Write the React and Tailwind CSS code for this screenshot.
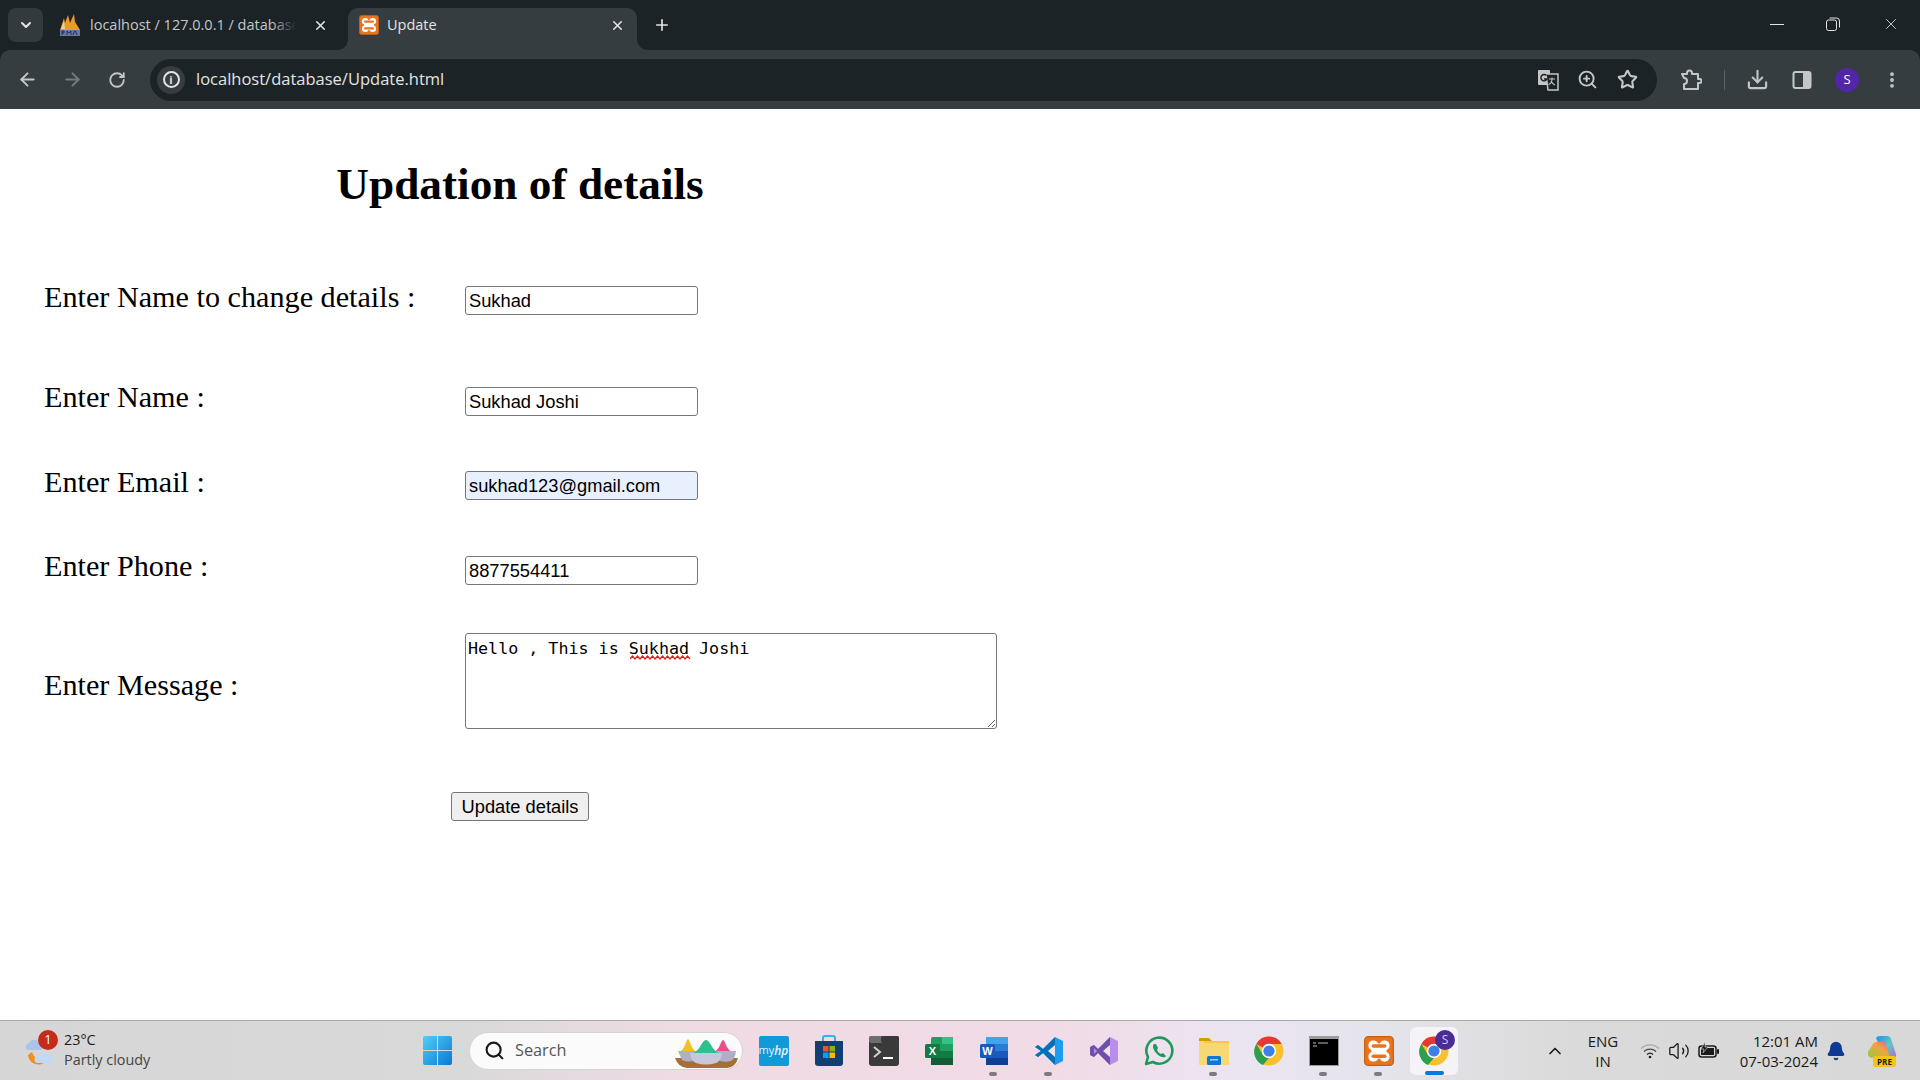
import React from 'react';
import {
  ArrowLeft, ArrowRight, RotateCw, X, Plus, ChevronDown, ChevronUp, Search, ZoomIn, Star,
  Download, EllipsisVertical, Bell, Volume2,
} from 'lucide-react';

const XamppIcon = ({ size = 20 }) => (
  <svg width={size} height={size} viewBox="0 0 24 24">
    <rect x="0.500" y="0.500" width="23" height="23" rx="3" fill="#e8741f" stroke="#c85f12" />
    <circle cx="7.500" cy="7.500" r="4" fill="#fff" />
    <circle cx="16.500" cy="7.500" r="4" fill="#fff" />
    <circle cx="7.500" cy="16.500" r="4" fill="#fff" />
    <circle cx="16.500" cy="16.500" r="4" fill="#fff" />
    <rect x="6" y="6" width="12" height="12" fill="#fff" />
    <rect x="6" y="6.500" width="12" height="2.800" rx="1.400" fill="#e8741f" />
    <rect x="6" y="14.700" width="12" height="2.800" rx="1.400" fill="#e8741f" />
  </svg>
);

const PmaIcon = () => (
  <svg width="22" height="24" viewBox="0 0 22 24">
    <path d="M1 17 5 5l1 5 3-8 2 8 4-9 1 8 5 8z" fill="#f09a26" />
    <path d="M2 16 5 8l1 8z" fill="#d9d4c8" />
    <rect x="1" y="17" width="20" height="6" fill="#6a78a8" />
    <path d="M3 22v-4h2v2H3m5 2v-4l2 2 2-2v4m2 0 1.500-4h1L18 22" fill="none" stroke="#20294d" strokeWidth="0.900" />
  </svg>
);

const TranslateIcon = () => (
  <svg width="22" height="22" viewBox="0 0 22 22">
    <rect x="1" y="1" width="12" height="15" rx="1" fill="#c4c7c5" />
    <path d="M9 5h12v16H11z" fill="#1b2327" stroke="#c4c7c5" strokeWidth="1.500" />
    <path d="M9.500 6.500a3.200 3.200 0 1 0 0.500 3.500H7" fill="none" stroke="#1b2327" strokeWidth="1.400" />
    <path d="M12 10h6M15 8.500V10c0 3-2 5-3.500 5.500M14 12c1 2 2.500 3.500 4 4" fill="none" stroke="#c4c7c5" strokeWidth="1.100" />
  </svg>
);

const PuzzleIcon = () => (
  <svg width="22" height="22" viewBox="0 0 22 22" fill="none" stroke="#c4c7c5" strokeWidth="2">
    <path d="M2 5h5V4a2.500 2.500 0 0 1 5 0v1h6v5h1.500a2 2 0 0 1 0 4H18v6H4v-5a3 3 0 0 0 0-6L2 5z" strokeLinejoin="round" />
  </svg>
);

const SidePanelIcon = () => (
  <svg width="20" height="20" viewBox="0 0 20 20">
    <rect x="1.500" y="2" width="17" height="16" rx="2" fill="none" stroke="#c4c7c5" strokeWidth="2" />
    <rect x="11" y="2" width="8" height="16" rx="1.500" fill="#c4c7c5" />
  </svg>
);

const RestoreIcon = () => (
  <svg width="14" height="14" viewBox="0 0 14 14" fill="none" stroke="#e3e3e3" strokeWidth="1">
    <rect x="0.500" y="3" width="10" height="10.500" rx="2" />
    <path d="M3.500 1h7a3 3 0 0 1 3 3v6.500" />
  </svg>
);

const WeatherIcon = () => (
  <svg width="32" height="36" viewBox="0 0 32 36">
    <path d="M3 22c1 7 7 11 14 9 2-1 4-2 5-4-6 1-13-1-15-8z" fill="#f28c1e" />
    <path d="M2 17a4 4 0 0 1 2-7 6 6 0 0 1 11 1 3 3 0 0 1 0 6z" fill="#a9c4e8" />
    <path d="M13 30a3.500 3.500 0 0 1 0-7 5 5 0 0 1 9-1 4 4 0 0 1 4 8z" fill="#c3d8f3" />
  </svg>
);

const WindowsLogo = () => (
  <svg width="29" height="29" viewBox="0 0 29 29">
    <defs>
      <linearGradient id="winA" x1="0" y1="0" x2="1" y2="1">
        <stop offset="0" stopColor="#4fd0f5" />
        <stop offset="1" stopColor="#0a78d4" />
      </linearGradient>
    </defs>
    <path d="M0 2a2 2 0 0 1 2-2h12v14H0zM15 0h12a2 2 0 0 1 2 2v12H15zM0 15h14v14H2a2 2 0 0 1-2-2zM15 15h14v12a2 2 0 0 1-2 2H15z" fill="url(#winA)" />
  </svg>
);

const HoliBowls = () => (
  <svg width="66" height="34" viewBox="0 0 66 34">
    <path d="M0 22h63q-2 9-11 10H12Q3 31 0 22z" fill="#a56f35" />
    <path d="M5 16q3-2 5-7 2-6 3-6t3 6q2 5 5 7z" fill="#eec32a" />
    <path d="M39 16q4-2 6-7 2-5 3-5t3 5q2 5 6 7z" fill="#e84f85" />
    <path d="M3 15h20l-2 9q-8 3-14 0z" fill="#b0afc8" />
    <path d="M39 15h22q-1 8-5 10-7 2-14-1z" fill="#b0afc8" />
    <path d="M17 18q6-3 9-9 3-5 5-5t5 5q3 6 9 9z" fill="#2dbf8e" />
    <path d="M15 17h32q-1 8-6 10-10 3-20 0-5-2-6-10z" fill="#c8c8dc" />
  </svg>
);

const MyHp = () => (
  <div className="w-[30px] h-[30px] bg-[#119ad8] rounded-[2px] flex items-center justify-center text-[11px] text-[#e6f5fc] font-['Open_Sans',sans-serif]">
    my<b className="italic text-[12px] font-semibold">hp</b>
  </div>
);

const StoreIcon = () => (
  <svg width="30" height="32" viewBox="0 0 30 32">
    <path d="M9 6V3a2 2 0 0 1 2-2h8a2 2 0 0 1 2 2v3" fill="none" stroke="#29b6e8" strokeWidth="2" />
    <path d="M1 6h28v22a3 3 0 0 1-3 3H4a3 3 0 0 1-3-3z" fill="#123f73" />
    <rect x="9" y="11" width="5.500" height="5.500" fill="#f25022" />
    <rect x="15.500" y="11" width="5.500" height="5.500" fill="#7fba00" />
    <rect x="9" y="17.500" width="5.500" height="5.500" fill="#00a4ef" />
    <rect x="15.500" y="17.500" width="5.500" height="5.500" fill="#ffb900" />
  </svg>
);

const TerminalIcon = () => (
  <svg width="30" height="30" viewBox="0 0 30 30">
    <rect width="30" height="30" rx="3" fill="#3a3a3a" />
    <rect x="0" width="30" height="7" rx="2" fill="#6d6d6d" />
    <rect x="12" width="18" height="7" rx="2" fill="#3a3a3a" />
    <path d="M5 11l6 5-6 5" fill="none" stroke="#d0d0d0" strokeWidth="2" />
    <path d="M14 22h10" stroke="#fff" strokeWidth="2" />
  </svg>
);

const ExcelIcon = () => (
  <svg width="30" height="30" viewBox="0 0 30 30">
    <rect x="7" y="1" width="22" height="28" rx="2" fill="#1f9d63" />
    <rect x="18" y="1" width="11" height="7" fill="#33c481" />
    <rect x="7" y="15" width="22" height="7" fill="#107c41" />
    <rect x="7" y="22" width="22" height="7" fill="#185c37" />
    <rect x="1" y="8" width="15" height="14" rx="1.500" fill="#107c41" />
    <text x="8.500" y="19" textAnchor="middle" fontSize="11" fontWeight="700" fill="#fff" fontFamily="Liberation Sans">X</text>
  </svg>
);

const WordIcon = () => (
  <svg width="30" height="30" viewBox="0 0 30 30">
    <rect x="7" y="1" width="22" height="28" rx="2" fill="#2b7cd3" />
    <rect x="7" y="1" width="22" height="7" fill="#41a5ee" />
    <rect x="7" y="15" width="22" height="7" fill="#185abd" />
    <rect x="7" y="22" width="22" height="7" fill="#103f91" />
    <rect x="1" y="8" width="15" height="14" rx="1.500" fill="#185abd" />
    <text x="8.500" y="19" textAnchor="middle" fontSize="11" fontWeight="700" fill="#fff" fontFamily="Liberation Sans">W</text>
  </svg>
);

const VsCodeIcon = () => (
  <svg width="30" height="30" viewBox="0 0 30 30">
    <path d="M21 1l8 4v20l-8 4L9 17l-5 4-3-2 6-4-6-4 3-2 5 4z" fill="#1f9cf0" />
    <path d="M21 1v28L9 17l-5 4-3-2 6-4-6-4 3-2 5 4z" fill="#0065a9" opacity="0.800" />
    <path d="M21 9l-7 6 7 6z" fill="#efe3ea" />
  </svg>
);

const VisualStudioIcon = () => (
  <svg width="30" height="30" viewBox="0 0 30 30">
    <path d="M21 1l8 4v20l-8 4L9 17l-4 4-4-2V11l4-2 4 4z" fill="#b78eea" />
    <path d="M21 1v28L9 17l-4 4-4-2V11l4-2 4 4z" fill="#6f4fa8" />
    <path d="M21 9l-7 6 7 6z" fill="#efe3ea" />
    <path d="M5 12v6l3-3z" fill="#b78eea" />
  </svg>
);

const WhatsAppIcon = () => (
  <svg width="32" height="32" viewBox="0 0 32 32">
    <path d="M3 29l2-7a13 13 0 1 1 5 5z" fill="none" stroke="#1d9a5a" strokeWidth="2.600" strokeLinejoin="round" />
    <path d="M11 9c-2 2-1 6 3 10s8 4 9 2l-3-3-2 1c-2-1-3-2-4-4l1-2-2-4z" fill="#1d9a5a" />
  </svg>
);

const FolderIcon = () => (
  <svg width="30" height="30" viewBox="0 0 30 30">
    <path d="M0 3a1 1 0 0 1 1-1h9l3 3h-13z" fill="#d79a10" />
    <rect y="5" width="30" height="24" rx="1" fill="#f8d775" />
    <rect x="5" y="5" width="25" height="2" fill="#f5c84c" />
    <rect x="8" y="20" width="14" height="9" rx="1.500" fill="#0a78d4" />
    <rect x="11" y="23" width="8" height="1.500" fill="#9ad0f5" />
  </svg>
);

const ChromeIcon = ({ size = 30 }) => (
  <svg width={size} height={size} viewBox="0 0 30 30">
    <circle cx="15" cy="15" r="14.500" fill="#fbc02d" />
    <path d="M15 .500A14.500 14.500 0 0 1 27.600 8H15a7 7 0 0 0-6.200 3.600L2.400 7.900A14.500 14.500 0 0 1 15 .500z" fill="#e53935" />
    <path d="M2.400 7.900l6.400 10.700a7 7 0 0 0 6.200 3.400l-6 7A14.500 14.500 0 0 1 2.400 7.900z" fill="#2e9e4f" />
    <circle cx="15" cy="15" r="7.200" fill="#fff" />
    <circle cx="15" cy="15" r="5.600" fill="#3f7fe8" />
  </svg>
);

const CmdIcon = () => (
  <svg width="30" height="30" viewBox="0 0 30 30">
    <rect width="30" height="30" fill="#9d9d9d" />
    <rect x="1" y="3" width="28" height="26" fill="#000" />
    <path d="M4 7h3M9 7h10M4 10h4" stroke="#bbb" strokeWidth="1" fill="none" />
  </svg>
);

const BatteryIcon = () => (
  <svg width="22" height="18" viewBox="0 0 22 18">
    <rect x="1" y="4" width="17" height="11" rx="2.500" fill="none" stroke="#1a1a1a" strokeWidth="1.500" />
    <rect x="3" y="6" width="13" height="7" fill="#1a1a1a" />
    <rect x="19" y="7" width="2" height="5" rx="1" fill="#1a1a1a" />
    <path d="M7 0 3 7h3l-1 4 5-6H7z" fill="#1a1a1a" stroke="#dcdcdc" strokeWidth="0.600" />
  </svg>
);

const WifiIcon = () => (
  <svg width="20" height="16" viewBox="0 0 20 16" fill="none">
    <path d="M1 5.500a13 13 0 0 1 18 0" stroke="#a8a8a8" strokeWidth="1.300" />
    <path d="M4 8.500a9 9 0 0 1 12 0" stroke="#4a4a4a" strokeWidth="1.300" />
    <path d="M7 11.500a4.500 4.500 0 0 1 6 0" stroke="#1a1a1a" strokeWidth="1.300" />
    <circle cx="10" cy="14" r="1.300" fill="#1a1a1a" />
  </svg>
);

const CopilotIcon = () => (
  <svg width="30" height="32" viewBox="0 0 30 32">
    <defs>
      <linearGradient id="copA" x1="0" y1="0" x2="1" y2="1">
        <stop offset="0" stopColor="#1d8fe8" />
        <stop offset="0.500" stopColor="#5fc8c0" />
        <stop offset="1" stopColor="#b56bd8" />
      </linearGradient>
      <linearGradient id="copB" x1="0" y1="1" x2="1" y2="0">
        <stop offset="0" stopColor="#8ccf3c" />
        <stop offset="0.600" stopColor="#f2a33c" />
        <stop offset="1" stopColor="#e85aa0" />
      </linearGradient>
    </defs>
    <path d="M9 3q1-2 4-2h7q3 0 4 3l5 15q1 4-3 4h-8z" fill="url(#copA)" />
    <path d="M1 17 6 9q1-2 4-2h8l5 16H6q-6 0-5-6z" fill="url(#copB)" />
  </svg>
);

const taskbarApps = [
  { key: 'myhp', icon: <MyHp /> },
  { key: 'store', icon: <StoreIcon /> },
  { key: 'terminal', icon: <TerminalIcon /> },
  { key: 'excel', icon: <ExcelIcon /> },
  { key: 'word', icon: <WordIcon />, open: true },
  { key: 'vscode', icon: <VsCodeIcon />, open: true },
  { key: 'vs', icon: <VisualStudioIcon /> },
  { key: 'whatsapp', icon: <WhatsAppIcon /> },
  { key: 'folder', icon: <FolderIcon />, open: true },
  { key: 'chrome', icon: <ChromeIcon /> },
  { key: 'cmd', icon: <CmdIcon />, open: true },
  { key: 'xampp', icon: <XamppIcon size={30} />, open: true },
];

function FormRow({ label, className = '', labelClass = '', children }) {
  return (
    <div className={`flex items-center ${className}`}>
      <label className={`w-[421px] text-[30.200px] leading-[34px] text-black ${labelClass}`}>{label}</label>
      {children}
    </div>
  );
}

const fieldClass = "w-[233px] h-[29px] px-[3px] border border-[#767676] rounded-[3px] text-[18.300px] text-black font-['Liberation_Sans',Arial,sans-serif] outline-none";

export default function App() {
  return (
    <div className="w-[1920px] h-[1080px] flex flex-col overflow-hidden bg-white font-['Open_Sans',sans-serif]">
      {/* Tab strip */}
      <div className="h-[50px] flex items-end bg-[#1b2327] pl-[8px] shrink-0">
        <div className="w-[35px] h-[34px] mb-[8px] rounded-lg bg-[#333a3e] flex items-center justify-center">
          <ChevronDown size={16} strokeWidth={3} color="#e3e3e3" />
        </div>
        <div className="w-[305px] h-[42px] flex items-center pl-[16px] pb-[8px]">
          <PmaIcon />
          <div className="relative ml-[9px] w-[206px] overflow-hidden whitespace-nowrap text-[14.500px] text-[#c4c7c5]">
            localhost / 127.0.0.1 / database
            <div className="absolute right-0 top-0 bottom-0 w-[24px] bg-gradient-to-r from-transparent to-[#1b2327]" />
          </div>
          <X size={15} strokeWidth={2.500} color="#e3e3e3" className="ml-[17px]" />
        </div>
        <div className="relative w-[289px] h-[42px] bg-[#363d41] rounded-t-[10px] flex items-center pl-[11px] pb-[8px]">
          <div className="absolute -left-[10px] bottom-0 w-[10px] h-[10px] bg-[radial-gradient(circle_at_0_0,#1b2327_9.500px,#363d41_10px)]" />
          <div className="absolute -right-[10px] bottom-0 w-[10px] h-[10px] bg-[radial-gradient(circle_at_100%_0,#1b2327_9.500px,#363d41_10px)]" />
          <XamppIcon />
          <span className="ml-[8px] flex-1 text-[14.500px] text-[#e3e3e3]">Update</span>
          <X size={15} strokeWidth={2.500} color="#e3e3e3" className="mr-[12px]" />
        </div>
        <Plus size={18} strokeWidth={2.200} color="#e3e3e3" className="ml-[16px] mb-[16px]" />
        <div className="flex-1" />
        <div className="flex items-center h-[50px] pb-[2px] pr-[20px] gap-[42px]">
          <div className="w-[14px] h-px bg-[#e3e3e3]" />
          <RestoreIcon />
          <X size={18} strokeWidth={1.100} color="#e3e3e3" />
        </div>
      </div>

      {/* Toolbar */}
      <div className="bg-[#1b2327] shrink-0">
        <div className="h-[59px] bg-[#363d41] rounded-t-[10px] flex items-center">
          <ArrowLeft size={21} strokeWidth={2.200} color="#c4c7c5" className="ml-[17px]" />
          <ArrowRight size={21} strokeWidth={2.200} color="#747a7d" className="ml-[24px]" />
          <RotateCw size={18} strokeWidth={2.400} color="#c4c7c5" className="ml-[25px]" />
          <div className="ml-[24px] w-[1507px] h-[42px] bg-[#1b2327] rounded-full flex items-center pl-[7px]">
            <div className="w-[28px] h-[28px] rounded-full bg-[#363d41] flex items-center justify-center">
              <div className="w-[17px] h-[17px] rounded-full border-2 border-[#e3e3e3] flex items-center justify-center text-[11px] font-bold leading-none text-[#e3e3e3]">i</div>
            </div>
            <span className="ml-[11px] text-[16.500px] text-[#e3e3e3] flex-1">localhost/database/Update.html</span>
            <TranslateIcon />
            <ZoomIn size={21} strokeWidth={2.200} color="#c4c7c5" className="ml-[18px]" />
            <Star size={21} strokeWidth={2.400} color="#c4c7c5" className="ml-[19px] mr-[19px]" />
          </div>
          <div className="ml-[23px]"><PuzzleIcon /></div>
          <div className="ml-[22px] w-px h-[20px] bg-[#5b6164]" />
          <Download size={23} strokeWidth={2.200} color="#c4c7c5" className="ml-[21px]" />
          <div className="ml-[23px]"><SidePanelIcon /></div>
          <div className="ml-[23px] w-[24px] h-[24px] rounded-full bg-[#5326a8] text-white text-[13px] flex items-center justify-center">S</div>
          <EllipsisVertical size={20} strokeWidth={2.600} color="#c4c7c5" className="ml-[23px]" />
        </div>
      </div>

      {/* Page */}
      <main className="flex-1 bg-white font-['Liberation_Serif','Times_New_Roman',serif]">
        <h1 className="w-[1040px] mt-[49px] text-center text-[45.300px] leading-[52px] font-bold text-black">Updation of details</h1>
        <div className="pl-[44px]">
          <FormRow label="Enter Name to change details :" className="mt-[76px] h-[29px]" labelClass="pb-[7px]">
            <input className={fieldClass} defaultValue="Sukhad" />
          </FormRow>
          <FormRow label="Enter Name :" className="mt-[72px] h-[29px]" labelClass="pb-[9px]">
            <input className={fieldClass} defaultValue="Sukhad Joshi" />
          </FormRow>
          <FormRow label="Enter Email :" className="mt-[55px] h-[29px]" labelClass="pb-[7px]">
            <input className={`${fieldClass} bg-[#e8f0fe]`} defaultValue="sukhad123@gmail.com" />
          </FormRow>
          <FormRow label="Enter Phone :" className="mt-[56px] h-[29px]" labelClass="pb-[9px]">
            <input className={fieldClass} defaultValue="8877554411" />
          </FormRow>
          <FormRow label="Enter Message :" className="mt-[48px]" labelClass="pt-[8px]">
            <div className="relative flex">
              <textarea
                spellCheck={false}
                className="w-[532px] h-[96px] px-[2px] py-[2px] border border-[#767676] rounded-[3px] text-[16.700px] leading-[24px] text-black font-['DejaVu_Sans_Mono',monospace] outline-none"
                defaultValue="Hello , This is Sukhad Joshi"
              />
              {/* spell-check squiggle under "Sukhad" */}
              <svg className="absolute left-[165px] top-[22px]" width="61" height="5" viewBox="0 0 61 5">
                <path d="M0 4 2.500 1 5 4 7.500 1 10 4 12.500 1 15 4 17.500 1 20 4 22.500 1 25 4 27.500 1 30 4 32.500 1 35 4 37.500 1 40 4 42.500 1 45 4 47.500 1 50 4 52.500 1 55 4 57.500 1 60 4" fill="none" stroke="#e81818" strokeWidth="1.200" />
              </svg>
            </div>
          </FormRow>
          <button className="mt-[63px] ml-[407px] w-[138px] h-[29px] bg-[#efefef] border border-[#767676] rounded-[3px] text-[18.300px] text-black font-['Liberation_Sans',Arial,sans-serif]">
            Update details
          </button>
        </div>
      </main>

      {/* Taskbar */}
      <div className="h-[60px] shrink-0 border-t border-[#a9a9a9] flex items-center bg-[linear-gradient(90deg,#d6d6d6_0%,#d9d9d9_24%,#f0dbe5_36%,#f1dbe6_55%,#ece4f2_64%,#e4e4ea_72%,#dadada_82%,#d8d8d8_100%)]">
        <div className="relative ml-[25px] w-[32px] h-[36px] shrink-0">
          <WeatherIcon />
          <div className="absolute left-[13px] -top-[3px] w-[20px] h-[20px] rounded-full bg-[#c42b1c] text-white text-[13px] flex items-center justify-center">1</div>
        </div>
        <div className="ml-[7px] w-[359px] shrink-0 text-[14.400px] leading-[20px] text-[#1a1a1a] -mt-[2px]">
          <div>23°C</div>
          <div className="text-[#444]">Partly cloudy</div>
        </div>
        <WindowsLogo />
        <div className="ml-[17px] w-[274px] h-[38px] rounded-full bg-[#fbfbfb] border border-[#d4d4d4] flex items-center pl-[14px] relative">
          <Search size={21} strokeWidth={2.400} color="#1a1a1a" />
          <span className="ml-[10px] text-[16.300px] text-[#555]">Search</span>
          <div className="absolute right-[1px] top-[3px]"><HoliBowls /></div>
        </div>
        <div className="ml-[3px] flex items-center">
          {taskbarApps.map((app) => (
            <div key={app.key} className="relative w-[55px] h-[48px] flex items-center justify-center">
              {app.icon}
              {app.open && <div className="absolute bottom-[-1px] left-[23px] w-[8px] h-[4px] rounded-full bg-[#7f7a80]" />}
            </div>
          ))}
          <div className="relative ml-[4px] w-[48px] h-[48px] rounded-md bg-[#f5f3f7] flex items-center justify-center">
            <ChromeIcon />
            <div className="absolute right-[3px] top-[3px] w-[20px] h-[20px] rounded-full bg-[#4a2c96] text-[#d8c8f5] text-[12px] flex items-center justify-center">S</div>
            <div className="absolute bottom-0 left-[15px] w-[19px] h-[4px] rounded-full bg-[#0a78d4]" />
          </div>
        </div>
        <ChevronUp size={20} strokeWidth={2} color="#1a1a1a" className="ml-[87px]" />
        <div className="ml-[20px] w-[36px] text-center text-[15px] leading-[20px] text-[#1a1a1a]">
          <div>ENG</div>
          <div>IN</div>
        </div>
        <div className="ml-[19px]"><WifiIcon /></div>
        <Volume2 size={22} strokeWidth={1.400} color="#1a1a1a" className="ml-[8px]" />
        <div className="ml-[8px]"><BatteryIcon /></div>
        <div className="ml-[19px] w-[79px] text-[15px] leading-[20px] text-[#1a1a1a] whitespace-nowrap flex flex-col items-end">
          <div>12:01 AM</div>
          <div>07-03-2024</div>
        </div>
        <Bell size={20} fill="#0f3a94" color="#0f3a94" className="ml-[8px]" />
        <div className="relative ml-[21px]">
          <CopilotIcon />
          <div className="absolute left-[6px] bottom-0 w-[23px] h-[11px] rounded-[2px] bg-[#f6c21c] text-[8px] leading-[11px] font-bold text-center text-[#222]">PRE</div>
        </div>
      </div>
    </div>
  );
}
